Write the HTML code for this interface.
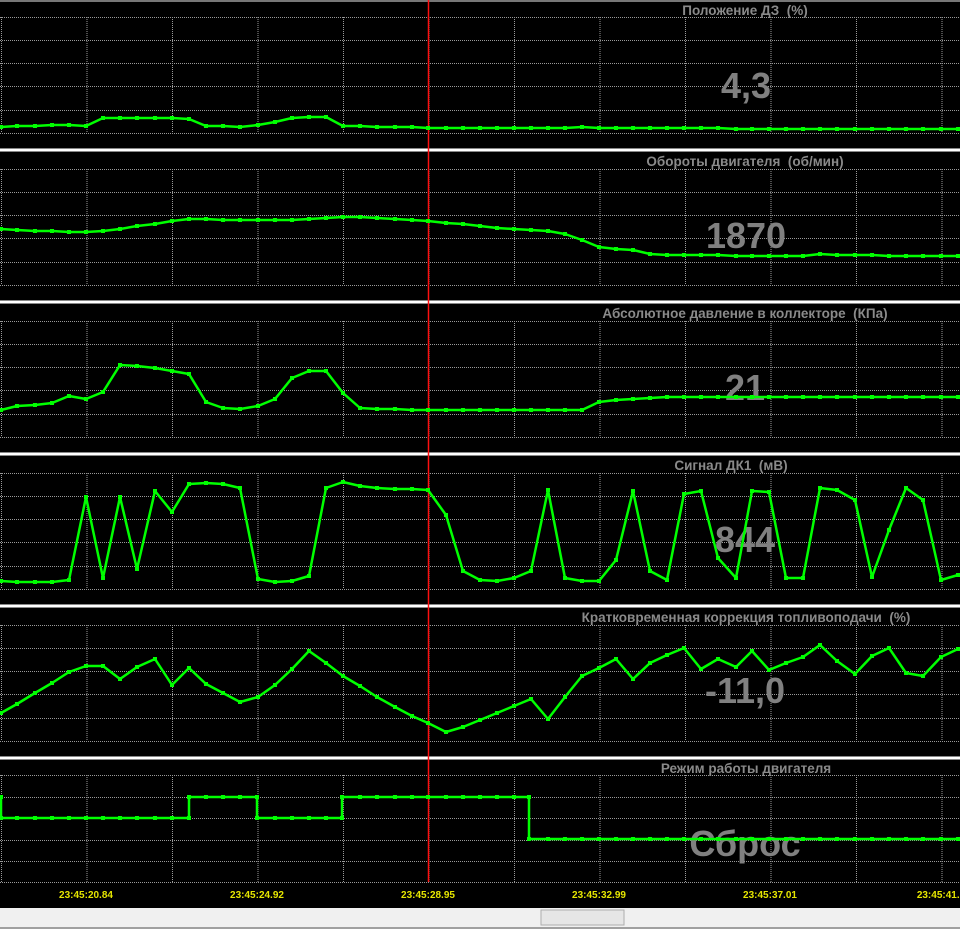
<!DOCTYPE html>
<html><head><meta charset="utf-8"><style>
html,body{margin:0;padding:0;background:#000;width:960px;height:929px;overflow:hidden}
svg{display:block}
.t{font-family:"Liberation Sans",sans-serif;font-weight:bold;font-size:13.5px;fill:#8a8a8a;text-anchor:middle;white-space:pre}
.v{font-family:"Liberation Sans",sans-serif;font-weight:bold;font-size:36px;fill:#808080;text-anchor:middle}
.tm{font-family:"Liberation Sans",sans-serif;font-weight:bold;font-size:10px;fill:#e6e600;text-anchor:middle}
.g{stroke:#9a9a9a;stroke-width:1;stroke-dasharray:1 1;fill:none}
.d{fill:none;stroke:#00ff00;stroke-width:2.5;stroke-linejoin:round;marker-start:url(#m);marker-mid:url(#m);marker-end:url(#m)}
</style></head><body>
<svg width="960" height="929" xmlns="http://www.w3.org/2000/svg" xml:space="preserve">
<defs>
<marker id="m" markerWidth="6" markerHeight="6" refX="3" refY="3" markerUnits="userSpaceOnUse"><rect x="1" y="1" width="4" height="4" fill="#00ff00"/></marker>
<g id="grid">
<path class="g" d="M0 17.5H960M0 40.5H960M0 63.5H960M0 86.5H960M0 110.5H960M0 133.5H960"/>
<path class="g" d="M1.5 17V133M87 17V133M172.5 17V133M258 17V133M343.5 17V133M429 17V133M514.5 17V133M600 17V133M685.5 17V133M771 17V133M856.5 17V133M942 17V133"/>
<rect x="0" y="148" width="960" height="4" fill="#888"/>
<rect x="0" y="149" width="960" height="2" fill="#fff"/>
</g>
</defs>
<rect x="0" y="0" width="960" height="2" fill="#777"/>
<use href="#grid" y="0"/>
<use href="#grid" y="152"/>
<use href="#grid" y="304"/>
<use href="#grid" y="456"/>
<use href="#grid" y="608"/>
<g transform="translate(0,758)">
<path class="g" d="M0 17.5H960M0 39.5H960M0 60.5H960M0 82.5H960M0 103.5H960M0 124.5H960"/>
<path class="g" d="M1.5 17V124M87 17V124M172.5 17V124M258 17V124M343.5 17V124M429 17V124M514.5 17V124M600 17V124M685.5 17V124M771 17V124M856.5 17V124M942 17V124"/>
</g>
<line x1="428.5" y1="0" x2="428.5" y2="882" stroke="#ff1010" stroke-width="1.5"/>

<text class="t" x="745" y="15">Положение ДЗ  (%)</text>
<text class="t" x="745" y="166">Обороты двигателя  (об/мин)</text>
<text class="t" x="745" y="318">Абсолютное давление в коллекторе  (КПа)</text>
<text class="t" x="731" y="470">Сигнал ДК1  (мВ)</text>
<text class="t" x="746" y="622">Кратковременная коррекция топливоподачи  (%)</text>
<text class="t" x="746" y="773">Режим работы двигателя</text>

<text class="v" x="746" y="98">4,3</text>
<text class="v" x="746" y="248">1870</text>
<text class="v" x="745" y="400">21</text>
<text class="v" x="745" y="552">844</text>
<text class="v" x="745" y="703">-11,0</text>
<text class="v" x="745" y="856">Сброс</text>

<polyline class="d" points="1,127 17,126 35,126 52,125 69,125 86,126 103,118 120,118 137,118 155,118 172,118 189,119 206,126 223,126 240,127 258,125 275,122 292,118 309,117 326,117 343,126 360,126 377,127 395,127 412,127 428,128 446,128 463,128 480,128 497,128 514,128 531,128 548,128 565,128 582,127 599,128 616,128 633,128 650,128 667,128 684,128 701,128 718,128 736,129 752,129 769,129 786,129 803,129 820,129 837,129 855,129 872,129 889,129 906,129 923,129 941,129 958,129"/>
<polyline class="d" points="1,229 17,230 35,231 52,231 69,232 86,232 103,231 120,229 137,226 155,224 172,221 189,219 206,219 223,220 240,220 258,220 275,220 292,220 309,219 326,218 343,217 360,217 377,218 395,219 412,220 428,221 446,223 463,224 480,226 497,228 514,229 531,230 548,231 565,234 582,240 599,247 616,249 633,250 650,254 667,255 684,255 701,255 718,255 736,256 752,256 769,256 786,256 803,256 820,254 837,255 855,255 872,255 889,256 906,256 923,256 941,256 958,256"/>
<polyline class="d" points="1,410 17,406 35,405 52,403 69,396 86,399 103,392 120,365 137,366 155,368 172,371 189,374 206,402 223,408 240,409 258,406 275,399 292,378 309,371 326,371 343,393 360,408 377,409 395,409 412,410 428,410 446,410 463,410 480,410 497,410 514,410 531,410 548,410 565,410 582,410 599,402 616,400 633,399 650,398 667,397 684,397 701,397 718,397 736,397 752,397 769,397 786,397 803,397 820,397 837,397 855,397 872,397 889,397 906,397 923,397 941,397 958,397"/>
<polyline class="d" points="1,581 17,582 35,582 52,582 69,580 86,497 103,578 120,497 137,569 155,491 172,512 189,484 206,483 223,484 240,488 258,579 275,582 292,581 309,576 326,488 343,482 360,486 377,488 395,489 412,489 428,490 446,515 463,571 480,580 497,581 514,578 531,571 548,490 565,578 582,581 599,581 616,560 633,491 650,571 667,580 684,494 701,491 718,558 736,578 752,491 769,492 786,578 803,578 820,488 837,490 855,500 872,577 889,530 906,488 923,500 941,580 958,575"/>
<polyline class="d" points="1,713 17,704 35,693 52,683 69,672 86,666 103,666 120,679 137,667 155,659 172,685 189,668 206,684 223,693 240,702 258,697 275,685 292,669 309,651 326,663 343,676 360,686 377,697 395,707 412,716 428,723 446,732 463,727 480,720 497,713 514,706 531,699 548,719 565,697 582,676 599,668 616,659 633,679 650,663 667,655 684,648 701,669 718,659 736,667 752,651 769,670 786,663 803,657 820,645 837,661 855,674 872,656 889,648 906,673 923,676 941,657 958,649"/>
<polyline class="d" points="1,797 1,818 17,818 35,818 52,818 69,818 86,818 103,818 120,818 137,818 155,818 172,818 189,818 189,797 206,797 223,797 240,797 257,797 257,818 275,818 292,818 309,818 326,818 342,818 342,797 360,797 377,797 395,797 412,797 428,797 446,797 463,797 480,797 497,797 514,797 529,797 529,839 548,839 565,839 582,839 599,839 616,839 633,839 650,839 667,839 684,839 701,839 718,839 736,839 752,839 769,839 786,839 803,839 820,839 837,839 855,839 872,839 889,839 906,839 923,839 941,839 958,839"/>

<text class="tm" x="86" y="898">23:45:20.84</text>
<text class="tm" x="257" y="898">23:45:24.92</text>
<text class="tm" x="428" y="898">23:45:28.95</text>
<text class="tm" x="599" y="898">23:45:32.99</text>
<text class="tm" x="770" y="898">23:45:37.01</text>
<text class="tm" x="941" y="898">23:45:41.1</text>

<rect x="0" y="908" width="960" height="21" fill="#f0f0f0"/>
<rect x="0" y="927" width="960" height="2" fill="#a0a0a0"/>
<rect x="541" y="910" width="83" height="15" fill="#e6e6e6" stroke="#adadad"/>
</svg>
</body></html>
